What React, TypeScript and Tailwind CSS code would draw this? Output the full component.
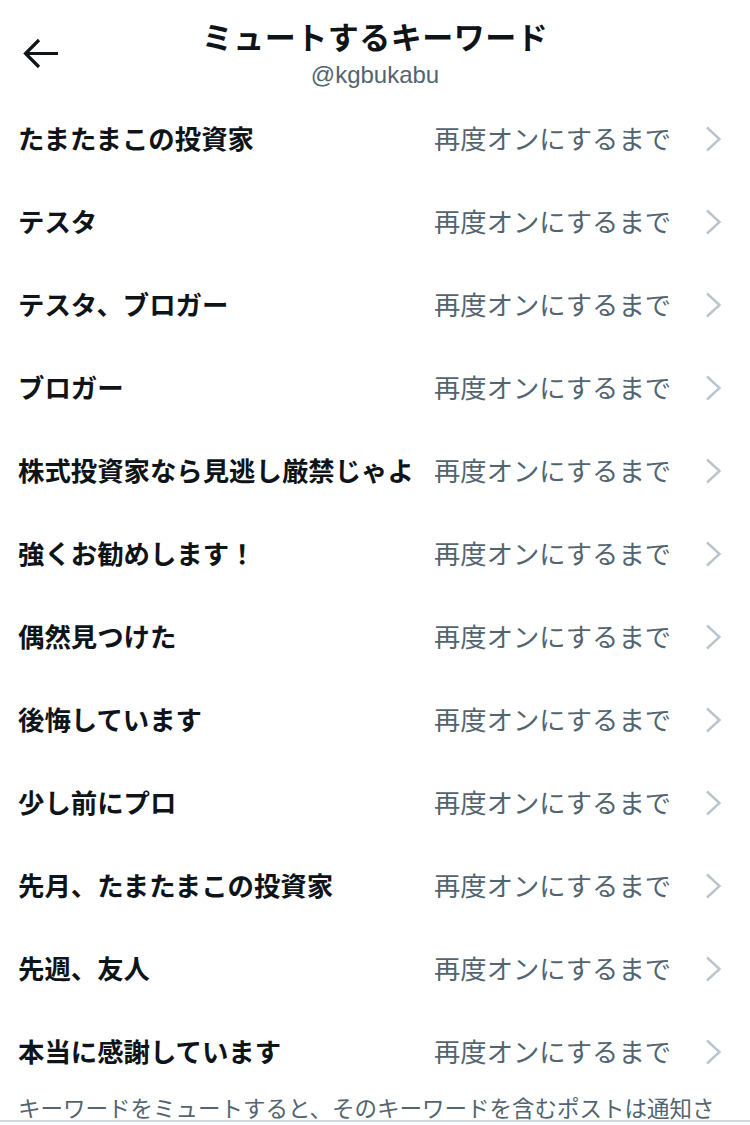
import React from "react";

const items = [
  "たまたまこの投資家",
  "テスタ",
  "テスタ、ブロガー",
  "ブロガー",
  "株式投資家なら見逃し厳禁じゃよ",
  "強くお勧めします！",
  "偶然見つけた",
  "後悔しています",
  "少し前にプロ",
  "先月、たまたまこの投資家",
  "先週、友人",
  "本当に感謝しています",
];

const jp = { fontFamily: '"Noto Sans CJK JP", "Noto Sans", sans-serif' };

export default function App() {
  return (
    <div className="w-[750px] h-[1125px] bg-white overflow-hidden relative" style={jp}>
      <div className="relative h-[97px]">
        <svg className="absolute left-[23px] top-[38px]" width="37" height="31" viewBox="0 0 37 31" fill="none">
          <path d="M35 15.5H3M16 2L2.5 15.5L16 29" stroke="#0f1419" strokeWidth="3.2" strokeLinecap="butt" strokeLinejoin="miter" />
        </svg>
        <div className="flex flex-col items-center pt-[15px]">
          <div className="text-[31px] leading-[42px] font-bold text-[#0f1419] tracking-[0.5px]">ミュートするキーワード</div>
          <div className="text-[24px] leading-[30px] text-[#536471] mt-[3px]" style={{ fontFamily: '"Liberation Sans", Arial, sans-serif' }}>@kgbukabu</div>
        </div>
      </div>
      <div className="flex flex-col">
        {items.map((t) => (
          <div key={t} className="h-[83px] flex items-center pl-[18px] pr-[28px]">
            <div className="flex-1 text-[26.4px] font-bold text-[#0f1419] leading-none whitespace-nowrap">{t}</div>
            <div className="text-[26.3px] text-[#536471] leading-none whitespace-nowrap ml-[8px]">再度オンにするまで</div>
            <svg className="ml-[34px]" width="17" height="26" viewBox="0 0 17 26" fill="none">
              <path d="M2 1.5L14.5 13L2 24.5" stroke="#b9c4cc" strokeWidth="2.4" />
            </svg>
          </div>
        ))}
      </div>
      <div className="pl-[18px] text-[22.5px] leading-[26px] text-[#536471] whitespace-nowrap mt-[1px]">
        キーワードをミュートすると、そのキーワードを含むポストは通知さ
      </div>
      <div className="absolute left-0 right-0 top-[1120px] h-[2px] bg-[#cfd9de]" />
      <div className="absolute left-0 right-0 top-[1122px] h-[3px] bg-white" />
    </div>
  );
}
